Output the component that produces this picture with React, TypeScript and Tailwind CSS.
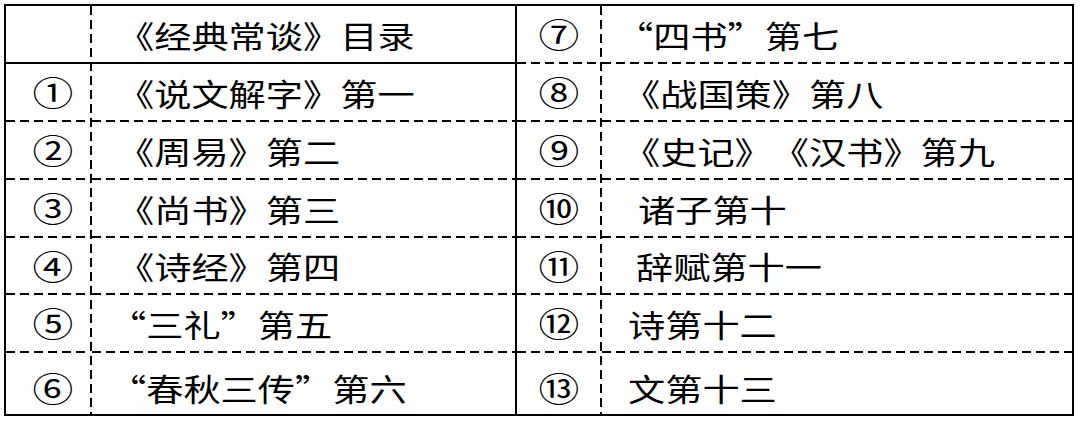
const LEFT_ROWS = [
  { n: '', t: '《经典常谈》目录', pl: 'pl-[25px]' },
  { n: '①', t: '《说文解字》第一', pl: 'pl-[25px]' },
  { n: '②', t: '《周易》第二', pl: 'pl-[25px]' },
  { n: '③', t: '《尚书》第三', pl: 'pl-[25px]' },
  { n: '④', t: '《诗经》第四', pl: 'pl-[25px]' },
  { n: '⑤', t: '“三礼”第五', pl: 'pl-[17px]' },
  { n: '⑥', t: '“春秋三传”第六', pl: 'pl-[17px]' },
];

const RIGHT_ROWS = [
  { n: '⑦', t: '“四书”第七', pl: 'pl-[14px]' },
  { n: '⑧', t: '《战国策》第八', pl: 'pl-[21px]' },
  { n: '⑨', t: '《史记》《汉书》第九', pl: 'pl-[21px]' },
  { n: '⑩', t: '诸子第十', pl: 'pl-[36px]' },
  { n: '⑪', t: '辞赋第十一', pl: 'pl-[34px]' },
  { n: '⑫', t: '诗第十二', pl: 'pl-[26px]' },
  { n: '⑬', t: '文第十三', pl: 'pl-[26px]' },
];

// row heights between the 2px rules; the last row sits a bit low
const ROW_H = [
  'h-[56px]',
  'h-[56px]',
  'h-[56px]',
  'h-[56px]',
  'h-[55px]',
  'h-[56px]',
  'h-[61px] pt-[8px]',
];

const FONT = "font-['Noto_Sans_CJK_SC','Liberation_Serif',sans-serif] [text-spacing-trim:space-all]";

function HRule({ solid }: { solid?: boolean }) {
  if (solid) return <div className="h-[2px] w-full bg-black" />;
  return (
    <div className="h-[2px] w-full bg-[repeating-linear-gradient(to_right,#000_0_9px,transparent_9px_14px)]" />
  );
}

function VDash() {
  return (
    <div className="w-[2px] self-stretch bg-[repeating-linear-gradient(to_bottom,#000_0_9px,transparent_9px_14px)]" />
  );
}

function Half({
  rows,
  numW,
  numPl = '',
  solidFirst,
}: {
  rows: { n: string; t: string; pl: string }[];
  numW: string;
  numPl?: string;
  solidFirst?: boolean;
}) {
  return (
    <div className="flex flex-1 h-full">
      {/* number column */}
      <div className={`flex flex-col ${numW}`}>
        {rows.map((r, i) => (
          <div key={i} className="flex flex-col">
            <div className={`${ROW_H[i]} ${numPl} flex items-center justify-center`}>
              <span className="inline-block scale-x-[1.2] text-[34px] leading-none">{r.n}</span>
            </div>
            {i < rows.length - 1 && <HRule solid={solidFirst && i === 0} />}
          </div>
        ))}
      </div>
      <VDash />
      {/* title column */}
      <div className="flex flex-col flex-1">
        {rows.map((r, i) => (
          <div key={i} className="flex flex-col">
            <div className={`${ROW_H[i]} flex items-center ${r.pl}`}>
              <span className="inline-block origin-left scale-x-[1.2] whitespace-nowrap text-[31px] leading-none">
                {r.t}
              </span>
            </div>
            {i < rows.length - 1 && <HRule solid={solidFirst && i === 0} />}
          </div>
        ))}
      </div>
    </div>
  );
}

export default function App() {
  return (
    <div className={`w-[1080px] h-[421px] bg-white pt-[4px] pl-[4px] text-black ${FONT}`}>
      <div className="flex w-[1070px] h-[412px] border-2 border-black">
        <div className="flex w-[509px] h-full">
          <Half rows={LEFT_ROWS} numW="w-[84px]" numPl="pl-[10px]" solidFirst />
        </div>
        <div className="w-[2px] h-full bg-black" />
        <div className="flex flex-1 h-full">
          <Half rows={RIGHT_ROWS} numW="w-[83px]" />
        </div>
      </div>
    </div>
  );
}
